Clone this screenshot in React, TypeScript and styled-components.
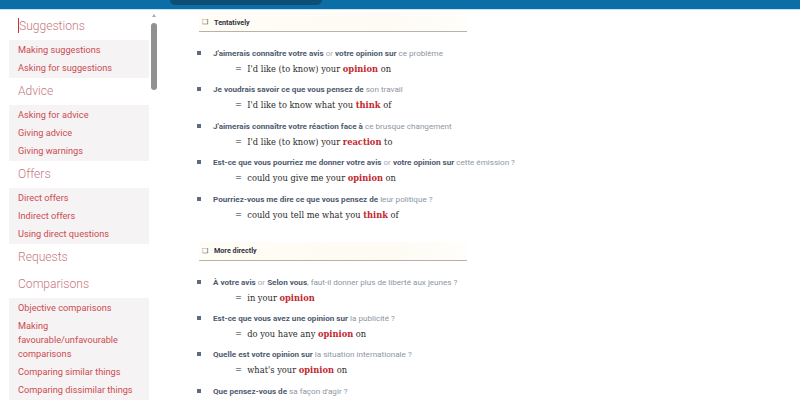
import React from 'react';
import styled, { createGlobalStyle } from 'styled-components';

const GlobalStyle = createGlobalStyle`
    body {
        margin: 0;
        padding: 0;
        font-family: Roboto, 'Liberation Sans', sans-serif;
        background: #fff;
    }
`;

const Page = styled.div`
    width: 800px;
    height: 400px;
    overflow: hidden;
    display: flex;
    flex-direction: column;
`;

const TopBar = styled.div`
    height: 9px;
    flex-shrink: 0;
    background: #0b6ea7;
    border-bottom: 1px solid #c6e4f0;
    padding-left: 170px;
`;

const TopTab = styled.div`
    width: 152px;
    height: 5px;
    background: #0e4d74;
    border-radius: 0 0 5px 5px;
`;

const Main = styled.div`
    flex: 1;
    display: flex;
    min-height: 0;
`;

const Sidebar = styled.aside`
    display: flex;
    padding-left: 9px;
    width: 149px;
    flex-shrink: 0;
`;

const Nav = styled.nav`
    width: 141px;
    padding-top: 3px;
`;

const GroupTitle = styled.div`
    height: 27px;
    line-height: 27px;
    padding: 0 9px;
    font-family: Roboto, sans-serif;
    font-weight: 300;
    font-size: 12.1px;
    color: #c7787f;
`;

const Caret = styled.span`
    display: inline-block;
    width: 1px;
    height: 15px;
    background: #c3343c;
    vertical-align: -3px;
`;

const Links = styled.ul`
    list-style: none;
    margin: 0;
    padding: 1px 0;
    background: #f5f3f4;
`;

const LinkItem = styled.li`
    padding: 2px 9px;
    line-height: 14px;
    font-family: Roboto, sans-serif;
    font-size: 9.2px;
    color: #cc4b52;
`;

const ScrollTrack = styled.div`
    width: 8px;
    margin-left: 1px;
    display: flex;
    flex-direction: column;
    align-items: center;
    padding-top: 4px;
`;

const ScrollArrow = styled.div`
    width: 0;
    height: 0;
    border-left: 2.5px solid transparent;
    border-right: 2.5px solid transparent;
    border-bottom: 3px solid #a8a8a8;
`;

const ScrollThumb = styled.div`
    width: 6px;
    height: 67px;
    margin-top: 6px;
    border-radius: 3px;
    background: #919191;
`;

const Content = styled.main`
    margin-left: 39px;
    width: 320px;
    padding-top: 3px;
`;

const Section = styled.section`
    margin-bottom: 19px;
`;

const SectionHead = styled.div`
    width: 265px;
    height: 18px;
    margin-left: 2px;
    display: flex;
    align-items: center;
    gap: 6px;
    padding-left: 3px;
    background: linear-gradient(90deg, #fffdf6, #fdfbf3 70%, #fffefb);
    border-bottom: 1px solid #b9b2a8;
    font-size: 7.2px;
    font-weight: 700;
    color: #2f3340;
`;

const Box = styled.span`
    font-size: 7px;
    font-weight: 400;
    color: #55585f;
`;

const Items = styled.ul`
    list-style: none;
    margin: 13px 0 0;
    padding: 0;
`;

const Item = styled.li`
    margin-bottom: 4.4px;
`;

const French = styled.div`
    display: flex;
    align-items: center;
    height: 16px;
    font-size: 8.1px;
    color: #8d96a2;
    white-space: nowrap;
`;

const Bullet = styled.span`
    width: 4px;
    height: 4px;
    margin-right: 12px;
    background: #5e6b7c;
    flex-shrink: 0;
`;

const Key = styled.b`
    font-weight: 700;
    color: #4e5b6d;
    white-space: pre;
`;

const Or = styled.span`
    color: #a4abb4;
    white-space: pre;
`;

const Plain = styled.span`
    white-space: pre;
`;

const English = styled.div`
    height: 16px;
    line-height: 16px;
    padding-left: 38px;
    font-family: 'DejaVu Serif', 'Liberation Serif', serif;
    font-size: 8.3px;
    color: #2b2b2b;
    white-space: pre;
`;

const Strong = styled.b`
    color: #c3262e;
    font-weight: 700;
`;

type Part = [kind: 'k' | 'o' | 'p', text: string];

interface Entry {
    fr: Part[];
    en: [string, string, string];
}

const nav: { title: string; links: string[] }[] = [
    { title: 'Suggestions', links: ['Making suggestions', 'Asking for suggestions'] },
    { title: 'Advice', links: ['Asking for advice', 'Giving advice', 'Giving warnings'] },
    { title: 'Offers', links: ['Direct offers', 'Indirect offers', 'Using direct questions'] },
    { title: 'Requests', links: [] },
    {
        title: 'Comparisons',
        links: [
            'Objective comparisons',
            'Making favourable/unfavourable comparisons',
            'Comparing similar things',
            'Comparing dissimilar things',
        ],
    },
];

const sections: { title: string; entries: Entry[] }[] = [
    {
        title: 'Tentatively',
        entries: [
            {
                fr: [['k', "J'aimerais connaître votre avis "], ['o', 'or '], ['k', 'votre opinion sur '], ['p', 'ce problème']],
                en: ["I'd like (to know) your ", 'opinion', ' on'],
            },
            {
                fr: [['k', 'Je voudrais savoir ce que vous pensez de '], ['p', 'son travail']],
                en: ["I'd like to know what you ", 'think', ' of'],
            },
            {
                fr: [['k', "J'aimerais connaître votre réaction face à "], ['p', 'ce brusque changement']],
                en: ["I'd like (to know) your ", 'reaction', ' to'],
            },
            {
                fr: [['k', 'Est-ce que vous pourriez me donner votre avis '], ['o', 'or '], ['k', 'votre opinion sur '], ['p', 'cette émission ?']],
                en: ['could you give me your ', 'opinion', ' on'],
            },
            {
                fr: [['k', 'Pourriez-vous me dire ce que vous pensez de '], ['p', 'leur politique ?']],
                en: ['could you tell me what you ', 'think', ' of'],
            },
        ],
    },
    {
        title: 'More directly',
        entries: [
            {
                fr: [['k', 'À votre avis '], ['o', 'or '], ['k', 'Selon vous'], ['p', ', faut-il donner plus de liberté aux jeunes ?']],
                en: ['in your ', 'opinion', ''],
            },
            {
                fr: [['k', 'Est-ce que vous avez une opinion sur '], ['p', 'la publicité ?']],
                en: ['do you have any ', 'opinion', ' on'],
            },
            {
                fr: [['k', 'Quelle est votre opinion sur '], ['p', 'la situation internationale ?']],
                en: ["what's your ", 'opinion', ' on'],
            },
            {
                fr: [['k', 'Que pensez-vous de '], ['p', "sa façon d'agir ?"]],
                en: ['', '', ''],
            },
        ],
    },
];

const renderPart = ([kind, text]: Part, i: number) => {
    if (kind === 'k') return <Key key={i}>{text}</Key>;
    if (kind === 'o') return <Or key={i}>{text}</Or>;
    return <Plain key={i}>{text}</Plain>;
};

const App: React.FC = () => {
    return (
        <>
            <GlobalStyle />
            <Page>
                <TopBar>
                    <TopTab />
                </TopBar>
                <Main>
                    <Sidebar>
                        <Nav>
                            {nav.map((group, gi) => (
                                <div key={group.title}>
                                    <GroupTitle>
                                        {gi === 0 && <Caret />}
                                        {group.title}
                                    </GroupTitle>
                                    {group.links.length > 0 && (
                                        <Links>
                                            {group.links.map(link => (
                                                <LinkItem key={link}>{link}</LinkItem>
                                            ))}
                                        </Links>
                                    )}
                                </div>
                            ))}
                        </Nav>
                        <ScrollTrack>
                            <ScrollArrow />
                            <ScrollThumb />
                        </ScrollTrack>
                    </Sidebar>
                    <Content>
                        {sections.map(section => (
                            <Section key={section.title}>
                                <SectionHead>
                                    <Box>❑</Box>
                                    {section.title}
                                </SectionHead>
                                <Items>
                                    {section.entries.map((entry, i) => (
                                        <Item key={i}>
                                            <French>
                                                <Bullet />
                                                {entry.fr.map(renderPart)}
                                            </French>
                                            {entry.en[0] && (
                                                <English>
                                                    {'=  '}
                                                    {entry.en[0]}
                                                    <Strong>{entry.en[1]}</Strong>
                                                    {entry.en[2]}
                                                </English>
                                            )}
                                        </Item>
                                    ))}
                                </Items>
                            </Section>
                        ))}
                    </Content>
                </Main>
            </Page>
        </>
    );
};

export default App;
